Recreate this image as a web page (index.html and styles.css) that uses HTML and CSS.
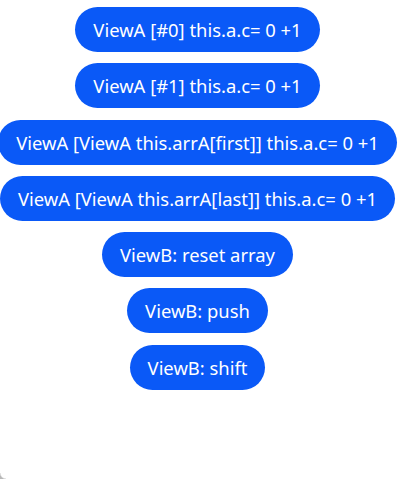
FILE: index.html
```html
<!DOCTYPE html>
<html>
<head>
<meta charset="utf-8">
<link rel="stylesheet" href="styles.css">
</head>
<body>
<div class="col">
  <button class="btn">ViewA [#0] this.a.c= 0 +1</button>
  <button class="btn">ViewA [#1] this.a.c= 0 +1</button>
  <button class="btn">ViewA [ViewA this.arrA[first]] this.a.c= 0 +1</button>
  <button class="btn">ViewA [ViewA this.arrA[last]] this.a.c= 0 +1</button>
  <button class="btn">ViewB: reset array</button>
  <button class="btn">ViewB: push</button>
  <button class="btn">ViewB: shift</button>
</div>
</body>
</html>
```
FILE: styles.css
```css
html, body {
  margin: 0;
  padding: 0;
  background: #ffffff;
  width: 400px;
  height: 479px;
  overflow: hidden;
}
body {
  position: relative;
}
body::after {
  content: "";
  position: absolute;
  left: 0;
  bottom: 0;
  width: 6px;
  height: 6px;
  background: radial-gradient(circle at 6px 0, transparent 5px, #b8b8b8 6.5px);
}
.col {
  width: 395px;
  display: flex;
  flex-direction: column;
  align-items: center;
  gap: 11.25px;
  padding-top: 7px;
}
.btn {
  flex: none;
  height: 45px;
  padding: 0 18px;
  border: none;
  border-radius: 22.5px;
  background: #0a59f7;
  color: #ffffff;
  font-family: "Noto Sans", sans-serif;
  font-size: 18.4px;
  line-height: 45px;
  white-space: nowrap;
}
```
